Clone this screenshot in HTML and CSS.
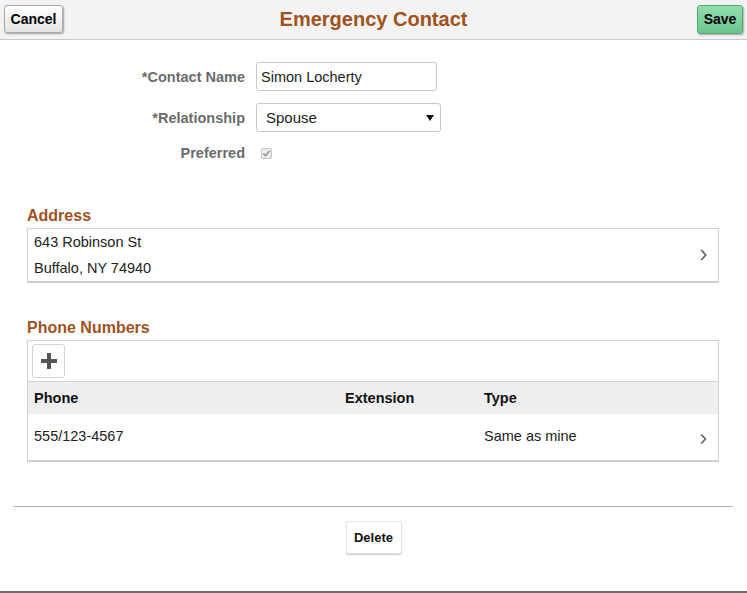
FILE: index.html
```html
<!DOCTYPE html>
<html lang="en">
<head>
<meta charset="utf-8">
<title>Emergency Contact</title>
<link rel="stylesheet" href="styles.css">
</head>
<body>
<div class="page">
  <header class="topbar">
    <div class="bar-left"><button class="btn btn-cancel" type="button">Cancel</button></div>
    <h1 class="title">Emergency Contact</h1>
    <div class="bar-right"><button class="btn btn-save" type="button">Save</button></div>
  </header>

  <main class="content">
    <div class="form">
      <label class="lbl" for="cname">*Contact Name</label>
      <div class="ctl"><input id="cname" class="text-input" type="text" value="Simon Locherty"></div>

      <label class="lbl">*Relationship</label>
      <div class="ctl">
        <div class="select-box">
          <span>Spouse</span>
          <svg class="caret" width="8" height="6" viewBox="0 0 8 6"><path d="M0 0H8L4 6Z" fill="#111"/></svg>
        </div>
      </div>

      <label class="lbl lbl-check">Preferred</label>
      <div class="ctl ctl-check">
        <span class="checkbox">
          <svg width="11" height="11" viewBox="0 0 11 11"><path d="M2.3 5.6 L4.5 7.8 L8.8 2.8" fill="none" stroke="#9a9a9a" stroke-width="1.6"/></svg>
        </span>
      </div>
    </div>

    <section class="group group-address">
      <h2 class="group-title">Address</h2>
      <div class="card address-card">
        <div class="addr-lines">
          <div>643 Robinson St</div>
          <div>Buffalo, NY 74940</div>
        </div>
        <svg class="chev" width="7" height="12" viewBox="0 0 7 12"><path d="M1.2 1 L5.8 6 L1.2 11" fill="none" stroke="#555" stroke-width="1.5"/></svg>
      </div>
    </section>

    <section class="group group-phone">
      <h2 class="group-title">Phone Numbers</h2>
      <div class="card phone-card">
        <div class="toolbar">
          <button class="add-btn" type="button" aria-label="Add">
            <svg width="16" height="16" viewBox="0 0 16 16"><path d="M6 0H10V6H16V10H10V16H6V10H0V6H6Z" fill="#555"/></svg>
          </button>
        </div>
        <div class="grid-row grid-head">
          <div class="cell">Phone</div>
          <div class="cell">Extension</div>
          <div class="cell">Type</div>
        </div>
        <div class="grid-row grid-data">
          <div class="cell">555/123-4567</div>
          <div class="cell"></div>
          <div class="cell cell-last">
            <span>Same as mine</span>
            <svg class="chev" width="7" height="12" viewBox="0 0 7 12"><path d="M1.2 1.5 L5.5 6 L1.2 10.5" fill="none" stroke="#555" stroke-width="1.4"/></svg>
          </div>
        </div>
      </div>
    </section>
  </main>

  <footer class="footer">
    <hr class="divider">
    <div class="footer-actions"><button class="btn-delete" type="button">Delete</button></div>
  </footer>
</div>
</body>
</html>
```

FILE: styles.css
```css
* { box-sizing: border-box; }

html, body {
  margin: 0;
  padding: 0;
  background: #fff;
  font-family: "Liberation Sans", Arial, sans-serif;
  color: #222;
}

.page {
  min-height: 100vh;
  display: flex;
  flex-direction: column;
  border-bottom: 2px solid #6b6b6b;
}

/* ---------- top bar ---------- */
.topbar {
  display: grid;
  grid-template-columns: 1fr auto 1fr;
  align-items: center;
  height: 40px;
  padding: 0 4px 1px 4px;
  background: #f3f3f3;
  border-bottom: 1px solid #c9c9c9;
}
.bar-left { justify-self: start; }
.bar-right { justify-self: end; }

.title {
  margin: 0;
  font-size: 20px;
  font-weight: bold;
  color: #a0521c;
  line-height: 24px;
}

.btn {
  font-family: "Liberation Sans", Arial, sans-serif;
  font-weight: bold;
  font-size: 14px;
  color: #000;
  border-radius: 3px;
  padding: 0;
  cursor: pointer;
}
.btn-cancel {
  width: 59px;
  height: 28px;
  background: linear-gradient(#ffffff, #e4e4e4);
  border: 1px solid #a9a9a9;
  box-shadow: 1px 1px 2px rgba(0, 0, 0, 0.35);
}
.btn-save {
  width: 46px;
  height: 29px;
  background: linear-gradient(#93ddad, #6cc58d);
  border: 1px solid #53a872;
  box-shadow: 1px 1px 2px rgba(0, 0, 0, 0.3);
}

/* ---------- content ---------- */
.content {
  padding: 0 28px 0 27px;
}

.form {
  display: grid;
  grid-template-columns: 218px 1fr;
  grid-template-rows: 29px 29px 20px;
  column-gap: 11px;
  row-gap: 12px;
  margin-top: 22px;
}
.form .lbl-check,
.form .ctl-check { margin-top: -2px; }

.lbl {
  justify-self: end;
  align-self: center;
  font-size: 14.5px;
  font-weight: bold;
  color: #6b6b6b;
}
.ctl {
  display: flex;
  align-items: center;
}

.text-input {
  width: 181px;
  height: 29px;
  border: 1px solid #c8c8c8;
  border-radius: 3px;
  padding: 0 4px;
  font-family: "Liberation Sans", Arial, sans-serif;
  font-size: 14.5px;
  color: #222;
  background: #fff;
  outline: none;
}

.select-box {
  width: 185px;
  height: 29px;
  border: 1px solid #c8c8c8;
  border-radius: 3px;
  padding: 0 6px 0 9px;
  display: flex;
  align-items: center;
  justify-content: space-between;
  font-size: 15px;
  color: #222;
  background: #fff;
}
.caret { display: block; }

.checkbox {
  margin-left: 5px;
  width: 11px;
  height: 11px;
  border: 1px solid #c4c4c4;
  border-radius: 2px;
  background: #ececec;
  display: flex;
  align-items: center;
  justify-content: center;
}
.checkbox svg { display: block; margin: -1px; }

/* ---------- groups ---------- */
.group-title {
  margin: 0 0 2px 0;
  font-size: 16px;
  line-height: 20px;
  font-weight: bold;
  color: #a0521c;
}
.group-address { margin-top: 42px; }
.group-phone { margin-top: 35px; }

.card {
  border: 1px solid #cfcfcf;
  border-bottom-width: 2px;
  background: #fff;
}

.address-card {
  display: flex;
  align-items: center;
  justify-content: space-between;
  padding: 0 11px 0 6px;
}
.addr-lines {
  font-size: 14.5px;
  line-height: 26px;
  color: #222;
}
.chev { display: block; flex: none; }

.toolbar {
  padding: 3px 0 3px 4px;
  display: flex;
}
.add-btn {
  width: 33px;
  height: 34px;
  padding: 0;
  background: #fff;
  border: 1px solid #d2d2d2;
  border-radius: 3px;
  display: flex;
  align-items: center;
  justify-content: center;
}
.add-btn svg { display: block; }

.grid-row {
  display: grid;
  grid-template-columns: 311px 139px 1fr;
  align-items: center;
}
.grid-head {
  height: 33px;
  background: #efefef;
  border-top: 1px solid #cfcfcf;
  font-size: 14.5px;
  font-weight: bold;
  color: #111;
}
.grid-data {
  height: 46px;
  padding-bottom: 3px;
  font-size: 14.5px;
  color: #222;
}
.cell { padding-left: 6px; }
.cell-last {
  display: flex;
  align-items: center;
  justify-content: space-between;
  padding-right: 11px;
}
.cell-last .chev { margin-top: 6px; }

/* ---------- footer ---------- */
.footer { padding-bottom: 30px; }
.divider {
  margin: 44px 14px 0 13px;
  border: 0;
  border-top: 1px solid #b4b4b4;
  height: 0;
}
.footer-actions {
  display: flex;
  justify-content: center;
  margin-top: 14px;
}
.btn-delete {
  width: 56px;
  height: 33px;
  padding: 0;
  background: #fff;
  border: 1px solid #e2e2e2;
  border-radius: 2px;
  box-shadow: 0 1px 1px rgba(0, 0, 0, 0.2);
  font-family: "Liberation Sans", Arial, sans-serif;
  font-size: 13px;
  font-weight: bold;
  color: #111;
}
```
